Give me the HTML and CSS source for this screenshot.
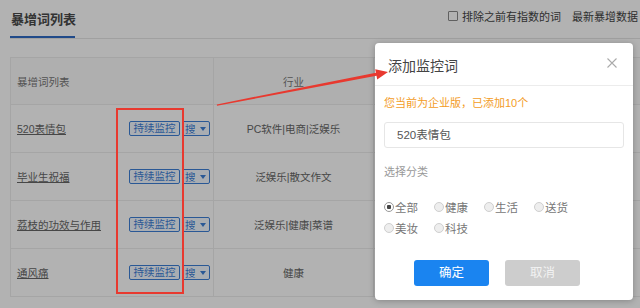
FILE: index.html
```html
<!DOCTYPE html>
<html lang="zh-CN">
<head>
<meta charset="UTF-8">
<title>暴增词列表</title>
<link rel="stylesheet" href="styles.css">
</head>
<body>
<div class="page">
    <div class="topbar">
        <div class="tab">暴增词列表</div>
        <div class="tools">
            <label class="check"><span class="box"></span>排除之前有指数的词</label>
            <span class="latest">最新暴增数据</span>
        </div>
    </div>
    <table class="words">
        <thead>
            <tr>
                <th class="col-word">暴增词列表</th>
                <th class="col-ind">行业</th>
                <th></th>
                <th></th>
            </tr>
        </thead>
        <tbody>
            <tr>
                <td class="col-word"><div class="word-cell"><a class="kw">520表情包</a><span class="btn-watch">持续监控</span><span class="btn-search">搜<i class="caret"></i></span></div></td>
                <td class="col-ind">PC软件|电商|泛娱乐</td>
                <td></td><td></td>
            </tr>
            <tr>
                <td class="col-word"><div class="word-cell"><a class="kw">毕业生祝福</a><span class="btn-watch">持续监控</span><span class="btn-search">搜<i class="caret"></i></span></div></td>
                <td class="col-ind">泛娱乐|散文作文</td>
                <td></td><td></td>
            </tr>
            <tr>
                <td class="col-word"><div class="word-cell"><a class="kw">荔枝的功效与作用</a><span class="btn-watch">持续监控</span><span class="btn-search">搜<i class="caret"></i></span></div></td>
                <td class="col-ind">泛娱乐|健康|菜谱</td>
                <td></td><td></td>
            </tr>
            <tr>
                <td class="col-word"><div class="word-cell"><a class="kw">通风痛</a><span class="btn-watch">持续监控</span><span class="btn-search">搜<i class="caret"></i></span></div></td>
                <td class="col-ind">健康</td>
                <td></td><td></td>
            </tr>
        </tbody>
    </table>
</div>

<div class="mask"></div>

<div class="dialog">
    <div class="dialog-head">
        <span class="dialog-title">添加监控词</span>
        <svg class="close" width="10" height="10" viewBox="0 0 10 10"><path d="M0.5 0.5 L9.5 9.5 M9.5 0.5 L0.5 9.5" stroke="#aaa" stroke-width="1.1" fill="none"/></svg>
    </div>
    <div class="dialog-body">
        <p class="notice">您当前为企业版，已添加10个</p>
        <div class="input">520表情包</div>
        <p class="label">选择分类</p>
        <div class="radios">
            <span class="radio checked"><i></i>全部</span>
            <span class="radio"><i></i>健康</span>
            <span class="radio"><i></i>生活</span>
            <span class="radio"><i></i>送货</span>
            <span class="radio"><i></i>美妆</span>
            <span class="radio"><i></i>科技</span>
        </div>
        <div class="actions">
            <span class="btn-ok">确定</span>
            <span class="btn-cancel">取消</span>
        </div>
    </div>
</div>

<svg class="annot" width="640" height="308" viewBox="0 0 640 308">
    <rect x="117" y="109" width="66" height="184" fill="none" stroke="#e8392f" stroke-width="2"/>
    <polygon points="217,105.8 376.5,75.8 377.2,79.4 388,72 375.2,69.2 375.9,72.8 216.8,104.4" fill="#e8392f"/>
</svg>
</body>
</html>
```

FILE: styles.css
```css
body {
    margin: 0;
    width: 640px;
    height: 308px;
    overflow: hidden;
    background-color: #fff;
    font-family: "Liberation Sans", "Noto Sans CJK SC", sans-serif;
    color: #333;
}
.page {
    padding: 0 0 0 10px;
    white-space: nowrap;
}
.topbar {
    display: flex;
    justify-content: space-between;
    border-bottom: 1px solid #e6e6e6;
    height: 38px;
}
.tab {
    font-size: 13px;
    line-height: 16px;
    font-weight: bold;
    color: #4a4a4a;
    padding: 12px 0 0 1px;
    width: 64px;
    height: 24px;
    border-bottom: 2px solid #2f6bc4;
}
.tools {
    display: flex;
    align-items: center;
    height: 32px;
    font-size: 11px;
    color: #444;
    padding-right: 2px;
}
.check {
    display: flex;
    align-items: center;
    margin-right: 11px;
}
.box {
    width: 8px;
    height: 8px;
    border: 1px solid #8a8a8a;
    background-color: #fff;
    margin-right: 4px;
    border-radius: 1px;
}
.words {
    margin-top: 18px;
    border-collapse: collapse;
    width: 760px;
    font-size: 10.5px;
    color: #666;
}
.words th, .words td {
    border: 1px solid #ececec;
    padding: 0;
}
.words th {
    height: 46px;
    font-weight: normal;
    color: #777;
    background-color: #fbfbfb;
}
.words td {
    height: 47px;
}
.words .col-word {
    width: 196px;
    text-align: left;
    padding-left: 6px;
}
.words .col-ind {
    width: 159px;
    text-align: center;
}
.word-cell {
    display: flex;
    align-items: center;
}
.kw {
    width: 112px;
    color: #666;
    text-decoration: underline;
}
.btn-watch {
    box-sizing: border-box;
    width: 51px;
    height: 15px;
    line-height: 13px;
    text-align: center;
    border: 1px solid #3d7fd6;
    border-radius: 2px;
    color: #3d7fd6;
    background-color: #f3f8ff;
}
.btn-search {
    box-sizing: border-box;
    display: flex;
    align-items: center;
    width: 28px;
    height: 15px;
    margin-left: 2px;
    padding-left: 2px;
    border: 1px solid #3d7fd6;
    border-radius: 2px;
    color: #3d7fd6;
    background-color: #f3f8ff;
}
.caret {
    width: 0;
    height: 0;
    margin-left: 4px;
    border-left: 3px solid transparent;
    border-right: 3px solid transparent;
    border-top: 4px solid #3d7fd6;
}
.mask {
    position: absolute;
    left: 0;
    top: 0;
    width: 640px;
    height: 308px;
    background-color: rgba(0, 0, 0, 0.3);
}
.dialog {
    position: absolute;
    left: 375px;
    top: 43px;
    width: 258px;
    height: 257px;
    background-color: #fff;
    border-radius: 4px;
    box-shadow: 0 1px 6px rgba(0, 0, 0, 0.25);
}
.dialog-head {
    display: flex;
    justify-content: space-between;
    align-items: center;
    height: 42px;
    padding: 0 16px 0 13px;
    border-bottom: 1px solid #ececec;
}
.dialog-title {
    font-size: 14px;
    color: #444;
    margin-top: 2px;
}
.close {
    margin-top: -3px;
}
.dialog-body {
    padding: 9px 9px 0 9px;
}
.notice {
    margin: 0;
    font-size: 11px;
    line-height: 16px;
    color: #f39c26;
}
.input {
    box-sizing: border-box;
    margin-top: 11px;
    width: 240px;
    height: 26px;
    line-height: 24px;
    padding-left: 12px;
    border: 1px solid #e6e6e6;
    border-radius: 3px;
    font-size: 11.5px;
    color: #555;
}
.label {
    margin: 16px 0 0 0;
    font-size: 11px;
    line-height: 16px;
    color: #999;
}
.radios {
    display: flex;
    flex-wrap: wrap;
    width: 210px;
    margin-top: 16px;
}
.radio {
    display: flex;
    align-items: center;
    width: 50px;
    height: 21px;
    font-size: 11.5px;
    color: #777;
}
.radio i {
    box-sizing: border-box;
    width: 10px;
    height: 10px;
    margin-right: 1px;
    border: 1px solid #cfcfcf;
    border-radius: 50%;
    background-color: #eee;
}
.radio.checked i {
    border-color: #999;
    background: radial-gradient(circle, #444 0, #444 2px, #fff 2.5px);
}
.actions {
    display: flex;
    margin-top: 22px;
    padding-left: 30px;
}
.btn-ok, .btn-cancel {
    width: 75px;
    height: 26px;
    line-height: 26px;
    text-align: center;
    font-size: 12.5px;
    border-radius: 3px;
}
.btn-ok {
    background-color: #1a84f0;
    color: #fff;
}
.btn-cancel {
    margin-left: 16px;
    background-color: #cdcdcd;
    color: #f2f2f2;
}
.annot {
    position: absolute;
    left: 0;
    top: 0;
    pointer-events: none;
}
```
